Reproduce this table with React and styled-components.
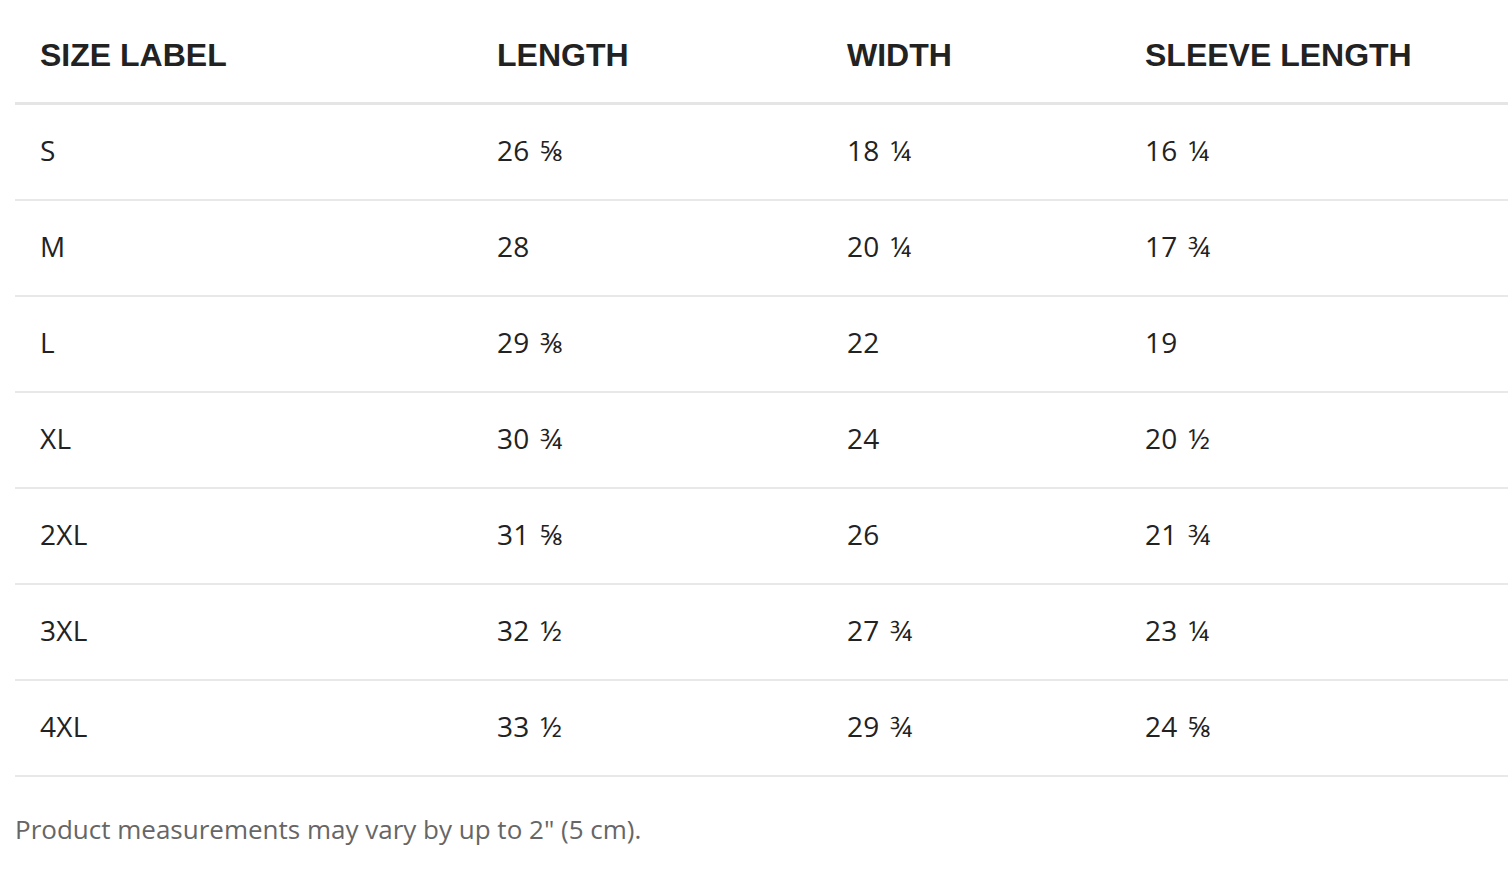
import styled, { createGlobalStyle } from 'styled-components';

const GlobalStyle = createGlobalStyle`
    body {
        margin: 0;
        background: #fff;
        font-family: "Open Sans", Lato, sans-serif;
        color: #222;
    }
`;

const Wrapper = styled.div`
    padding: 0 0 0 15px;
`;

const Table = styled.table`
    width: 1493px;
    border-collapse: collapse;
    table-layout: fixed;
`;

const HeadCell = styled.th`
    box-sizing: border-box;
    width: ${props => props.w}px;
    text-align: left;
    padding: 40px 0 31px 25px;
    font-family: "Liberation Sans", Arial, sans-serif;
    font-weight: 700;
    font-size: 32px;
    line-height: 31px;
    color: #222;
    border-bottom: 3px solid #e5e5e5;
`;

const Row = styled.tr`
    border-bottom: 2px solid #e8e8e8;
`;

const Cell = styled.td`
    padding: 0 0 4px 25px;
    height: 90px;
    font-size: 28px;
    line-height: 30px;
    letter-spacing: 0.3px;
    word-spacing: 3px;
    color: #222;
    vertical-align: middle;
`;

const Note = styled.p`
    margin: 34px 0 0;
    font-size: 26px;
    color: #666;
`;

const columns = [
    { label: "SIZE LABEL", w: 457 },
    { label: "LENGTH", w: 350 },
    { label: "WIDTH", w: 298 },
    { label: "SLEEVE LENGTH", w: 388 },
];

const rows = [
    ["S", "26 ⅝", "18 ¼", "16 ¼"],
    ["M", "28", "20 ¼", "17 ¾"],
    ["L", "29 ⅜", "22", "19"],
    ["XL", "30 ¾", "24", "20 ½"],
    ["2XL", "31 ⅝", "26", "21 ¾"],
    ["3XL", "32 ½", "27 ¾", "23 ¼"],
    ["4XL", "33 ½", "29 ¾", "24 ⅝"],
];

const App = () => {
    return (
        <Wrapper>
            <GlobalStyle />
            <Table>
                <thead>
                    <tr>
                        {columns.map((col) => (
                            <HeadCell key={col.label} w={col.w}>{col.label}</HeadCell>
                        ))}
                    </tr>
                </thead>
                <tbody>
                    {rows.map((row) => (
                        <Row key={row[0]}>
                            {row.map((value, i) => (
                                <Cell key={i}>{value}</Cell>
                            ))}
                        </Row>
                    ))}
                </tbody>
            </Table>
            <Note>Product measurements may vary by up to 2" (5 cm).</Note>
        </Wrapper>
    );
};

export default App;
